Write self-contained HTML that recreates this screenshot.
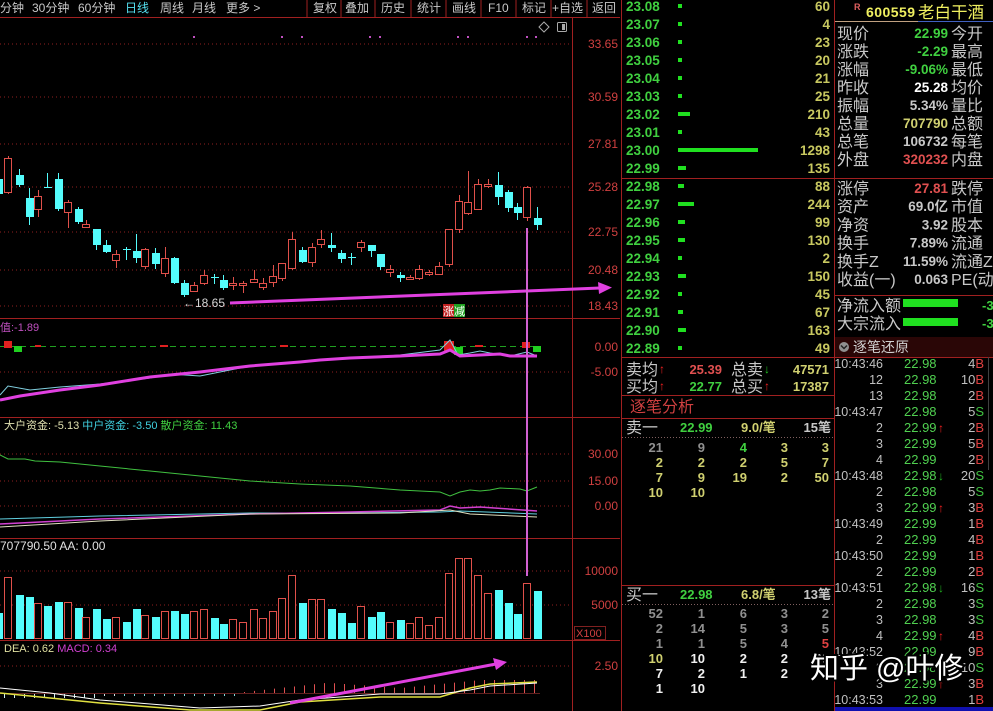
<!DOCTYPE html>
<html><head><meta charset="utf-8"><style>
html,body{margin:0;padding:0;background:#000;width:993px;height:711px;overflow:hidden}
svg{display:block}
text{font-family:"Liberation Sans","Noto Sans CJK SC",sans-serif}
.t{font-size:12px;fill:#c8c8c8}
.ax{font-size:12px;fill:#d04040}
.ob{font-size:13.5px;font-weight:bold}
.lb{font-size:16px;fill:#c8c8c8}
.v{font-size:13px;font-weight:bold}
</style></head><body>
<svg id="s" width="993" height="711" xmlns="http://www.w3.org/2000/svg">
<rect width="993" height="711" fill="#000"/>
<g class="t">
<text x="0" y="12">分钟</text><text x="32" y="12">30分钟</text><text x="78" y="12">60分钟</text>
<text x="125" y="12" style="fill:#54e0f0">日线</text><text x="160" y="12">周线</text><text x="192" y="12">月线</text><text x="226" y="12">更多 &gt;</text>
<text x="313" y="12">复权</text><text x="345" y="12">叠加</text><text x="381" y="12">历史</text><text x="417" y="12">统计</text><text x="452" y="12">画线</text><text x="488" y="12">F10</text><text x="522" y="12">标记</text><text x="552" y="12">+自选</text><text x="592" y="12">返回</text>
</g>
<g stroke="#a02020" stroke-width="1">
<line x1="307" y1="0" x2="307" y2="17"/><line x1="341" y1="0" x2="341" y2="17"/><line x1="375" y1="0" x2="375" y2="17"/><line x1="411" y1="0" x2="411" y2="17"/><line x1="446" y1="0" x2="446" y2="17"/><line x1="481" y1="0" x2="481" y2="17"/><line x1="516" y1="0" x2="516" y2="17"/><line x1="551" y1="0" x2="551" y2="17"/><line x1="587" y1="0" x2="587" y2="17"/>
<line x1="0" y1="17.5" x2="620" y2="17.5"/>
<line x1="572.5" y1="18" x2="572.5" y2="711"/>
<line x1="0" y1="318.5" x2="620" y2="318.5"/>
<line x1="0" y1="417.5" x2="620" y2="417.5"/>
<line x1="0" y1="538.5" x2="620" y2="538.5"/>
<line x1="0" y1="640.5" x2="620" y2="640.5"/>
<line x1="621.5" y1="0" x2="621.5" y2="711"/>
</g>
<g stroke="#902020" stroke-dasharray="1,3" stroke-width="1">
<line x1="0" y1="44" x2="572" y2="44"/><line x1="0" y1="97" x2="572" y2="97"/><line x1="0" y1="144" x2="572" y2="144"/><line x1="0" y1="187" x2="572" y2="187"/><line x1="0" y1="232" x2="572" y2="232"/><line x1="0" y1="270" x2="572" y2="270"/><line x1="0" y1="306" x2="572" y2="306"/>
<line x1="0" y1="372" x2="572" y2="372"/>
<line x1="0" y1="454" x2="572" y2="454"/><line x1="0" y1="481" x2="572" y2="481"/><line x1="0" y1="506" x2="572" y2="506"/>
<line x1="0" y1="571" x2="572" y2="571"/><line x1="0" y1="605" x2="572" y2="605"/>
<line x1="0" y1="666" x2="572" y2="666"/>
</g>
<g class="ax" text-anchor="end">
<text x="618" y="48">33.65</text><text x="618" y="101">30.59</text><text x="618" y="148">27.81</text><text x="618" y="191">25.28</text><text x="618" y="236">22.75</text><text x="618" y="274">20.48</text><text x="618" y="310">18.43</text>
<text x="618" y="351">0.00</text><text x="618" y="376">-5.00</text>
<text x="618" y="458">30.00</text><text x="618" y="485">15.00</text><text x="618" y="510">0.00</text>
<text x="618" y="575">10000</text><text x="618" y="609">5000</text>
<text x="618" y="670">2.50</text>
</g>
<rect x="574.5" y="626.5" width="31" height="13" fill="none" stroke="#802020"/>
<text x="576" y="637" class="ax" style="font-size:11px">X100</text>
<g fill="#c050c0">
<rect x="193" y="36" width="2" height="2"/><rect x="281" y="36" width="2" height="2"/><rect x="301" y="36" width="2" height="2"/><rect x="369" y="36" width="2" height="2"/><rect x="379" y="36" width="2" height="2"/><rect x="457" y="36" width="2" height="2"/><rect x="467" y="36" width="2" height="2"/><rect x="526" y="36" width="2" height="2"/><rect x="535" y="36" width="2" height="2"/>
</g>
<path d="M544 22 L549 27 L544 32 L539 27 Z" fill="none" stroke="#aaa"/>
<rect x="557.5" y="22.5" width="9" height="9" fill="none" stroke="#aaa" rx="1"/><rect x="562" y="24" width="3" height="6" fill="#aaa"/>
<g id="cd"></g>
<text x="183" y="307" style="font-size:12px;fill:#d8d8d8">←18.65</text>
<line x1="230" y1="303" x2="600" y2="288" stroke="#e040e0" stroke-width="3"/>
<path d="M612 287.5 L598 282 L599 294 Z" fill="#e040e0"/>
<rect x="443" y="304" width="11" height="13" fill="#c02020"/><rect x="454" y="304" width="11" height="13" fill="#20a020"/>
<text x="443" y="315" style="font-size:11px;fill:#fff">涨减</text>
<text x="0" y="331" style="font-size:11px;fill:#c050c0">值:-1.89</text>
<line x1="0" y1="346.5" x2="540" y2="346.5" stroke="#20a020" stroke-dasharray="6,4"/>
<g fill="#e02020"><rect x="4" y="341" width="8" height="7"/><rect x="444" y="341" width="10" height="10"/><rect x="522" y="342" width="8" height="6"/><rect x="35" y="345" width="6" height="2"/><rect x="280" y="345" width="8" height="2"/><rect x="160" y="345" width="8" height="2"/><rect x="475" y="345" width="8" height="2"/></g>
<g fill="#20d020"><rect x="14" y="346" width="8" height="6"/><rect x="454" y="347" width="9" height="8"/><rect x="533" y="346" width="8" height="6"/></g>
<polyline fill="none" stroke="#80d0e0" stroke-width="1" points="0,395 8,386 30,390 60,387 100,384 150,378 170,374 200,376 240,368 280,363 310,361 320,360 360,358 400,355 440,350 450,340 458,355 470,353 480,351 490,353 510,356 527,352 537,356"/>
<polyline fill="none" stroke="#e040e0" stroke-width="3" points="0,400 20,396 60,390 100,385 150,377 200,372 250,366 300,362 320,360 350,358 400,356 440,354 450,350 460,356 480,355 500,354 510,356 537,356"/>
<text x="4" y="429" style="font-size:11px"><tspan fill="#e0e0b0">大户资金: -5.13 </tspan><tspan fill="#40d0e0">中户资金: -3.50 </tspan><tspan fill="#40d040">散户资金: 11.43</tspan></text>
<polyline fill="none" stroke="#40c040" points="0,455 8,459 25,459 35,461 60,462 100,466 150,471 200,476 250,481 300,484 350,486 400,490 440,492 450,496 460,492 470,490 480,491 490,490 500,488 520,489 527,491 537,487"/>
<polyline fill="none" stroke="#60d0e0" points="0,519 100,516 250,513 350,513 440,512 460,511 537,514"/>
<polyline fill="none" stroke="#d040d0" stroke-width="1.5" points="0,524 100,519 250,514 350,512 440,510 450,506 460,508 480,507 537,511"/>
<polyline fill="none" stroke="#e0e0c0" points="0,527 100,521 250,514 400,513 450,510 470,514 537,517"/>
<text x="0" y="550" style="font-size:12px;fill:#e0e0e0">707790.50 AA: 0.00</text>
<text x="4" y="652" style="font-size:11px"><tspan fill="#e0e0a0">DEA: 0.62 </tspan><tspan fill="#d040d0">MACD: 0.34</tspan></text>
<g id="mh"></g>
<polyline fill="none" stroke="#e0e040" stroke-width="1.5" points="0,693 50,698 100,703 190,710 260,710 300,702 380,697 440,697 470,688 490,684 537,682"/>
<polyline fill="none" stroke="#fff" points="0,688 50,693 100,700 200,708 260,706 300,700 380,694 440,694 470,690 490,686 537,683"/>
<line x1="290" y1="703" x2="496" y2="664" stroke="#e040e0" stroke-width="3"/>
<path d="M507 662 L493 658 L496 670 Z" fill="#e040e0"/>
<line x1="527" y1="228" x2="527" y2="576" stroke="#d060d0" stroke-width="2"/>

<g stroke="#a02020"><line x1="622" y1="178.5" x2="835" y2="178.5"/><line x1="622" y1="357.5" x2="993" y2="357.5"/><line x1="834.5" y1="0" x2="834.5" y2="711"/>
<line x1="622" y1="395.5" x2="835" y2="395.5"/><line x1="622" y1="418.5" x2="835" y2="418.5"/><line x1="622" y1="585.5" x2="835" y2="585.5"/>
<line x1="835" y1="178.5" x2="993" y2="178.5"/><line x1="835" y1="295.5" x2="993" y2="295.5"/></g>
<g stroke="#806060" stroke-dasharray="1,2"><line x1="622" y1="437.5" x2="835" y2="437.5"/><line x1="622" y1="604.5" x2="835" y2="604.5"/></g>
<g id="ob"></g>
<g class="lb"><text x="626" y="375">卖均</text><text x="626" y="392">买均</text><text x="731" y="375">总卖</text><text x="731" y="392">总买</text></g>
<g class="v" text-anchor="end"><text x="722" y="374" fill="#e05050">25.39</text><text x="722" y="391" fill="#40d040">22.77</text><text x="829" y="374" fill="#d0d070">47571</text><text x="829" y="391" fill="#d0d070">17387</text></g>
<g style="font-size:12px;font-weight:bold"><text x="659" y="373" fill="#f02020">↑</text><text x="659" y="390" fill="#f02020">↑</text><text x="764" y="373" fill="#20c020">↓</text><text x="764" y="390" fill="#f02020">↑</text></g>
<text x="630" y="412" style="font-size:16px;fill:#d04040">逐笔分析</text>
<g class="lb"><text x="626" y="433">卖一</text><text x="626" y="600">买一</text></g>
<g class="v"><text x="680" y="432" fill="#40d040">22.99</text><text x="741" y="432" fill="#d0d070">9.0/笔</text><text x="680" y="599" fill="#40d040">22.98</text><text x="741" y="599" fill="#d0d070">6.8/笔</text></g>
<g class="v" text-anchor="end" fill="#c8c8c8"><text x="831" y="432">15笔</text><text x="831" y="599">13笔</text></g>
<g id="gr"></g>

<text x="854" y="10" style="font-size:9px;font-weight:bold;fill:#e06060">R</text>
<text x="866" y="17" style="font-size:14px;font-weight:bold;fill:#f0f060" textLength="49">600559</text>
<text x="918" y="18" style="font-size:16.5px;fill:#f0f060">老白干酒</text>
<line x1="835" y1="21.5" x2="918" y2="21.5" stroke="#c0a080"/><line x1="918" y1="21.5" x2="993" y2="21.5" stroke="#4060c0"/>
<g id="inf"></g>
<rect x="903" y="299" width="55" height="8" fill="#20e020"/><rect x="903" y="318" width="55" height="8" fill="#20e020"/>
<text x="837" y="311" class="lb">净流入额</text><text x="837" y="329" class="lb">大宗流入</text>
<text x="982" y="310" class="v" fill="#40d040">-3</text><text x="982" y="328" class="v" fill="#40d040">-3</text>
<rect x="835" y="337" width="158" height="20" fill="#2a0606"/>
<circle cx="844" cy="347" r="5" fill="#909090"/><path d="M841 345.5 L844 348.5 L847 345.5" stroke="#222" fill="none" stroke-width="1.5"/>
<text x="853" y="352" style="font-size:14px;fill:#d0d0d0">逐笔还原</text>
<g id="tk"></g>
<rect x="835" y="707" width="158" height="4" fill="#1010b0"/>
<line x1="988.5" y1="357" x2="988.5" y2="470" stroke="#404040"/>
<text x="810" y="678" style="font-size:29px;fill:#000;stroke:#000;stroke-width:4">知乎 @叶修</text>
<text x="810" y="678" style="font-size:29px;fill:#fff">知乎 @叶修</text>
</svg>
<script>
var NS="http://www.w3.org/2000/svg";
function el(p,t,a,txt){var e=document.createElementNS(NS,t);for(var k in a)e.setAttribute(k,a[k]);if(txt!=null)e.textContent=txt;p.appendChild(e);return e;}
var c=[[-2,0,179,194,175,196,613],[8,1,158,192,156,194,577],[18.5,0,175,185,169,187,595],[28.5,0,198,217,188,225,597],[37.5,1,196,209,190,217,603],[46.6,0,187,188,173,188,606],[57.7,0,179,209,173,211,602],[67.6,1,202,212,200,228,602],[77.5,0,209,222,207,224,608],[86,1,224,227,220,228,617],[96,0,229,245,229,250,609],[106,0,245,252,240,253,619],[116,1,254,260,250,268,617],[126,0,249,250,247,260,622],[135.6,0,251,258,234,263,609],[145,1,249,266,248,269,615],[155,0,253,264,248,269,617],[165,1,258,273,247,277,611],[174,0,258,283,257,284,611],[184,0,283,295,280,297,614],[194,1,285,291,282,292,611],[204,1,275,283,270,285,609],[214,0,277,278,274,284,618],[223,0,280,288,275,290,624],[233,1,283,285,277,290,619],[243,1,283,285,281,293,622],[254,1,279,282,270,283,609],[263,1,283,287,278,290,618],[273,1,276,282,265,287,611],[282,1,263,278,263,281,598],[292,1,239,268,232,270,575],[302,0,250,262,247,263,603],[312,1,247,262,243,267,599],[321,1,239,244,230,248,599],[331,0,245,248,233,252,609],[341,0,253,259,250,263,613],[350.6,0,257,258,253,265,623],[361,1,242,247,240,252,606],[371,0,245,251,245,257,617],[380,0,254,267,254,270,612],[390,1,269,272,265,277,622],[400,0,275,278,272,282,620],[410,1,277,279,275,280,623],[419,1,269,278,265,280,617],[429,1,272,274,270,276,625],[439,1,266,274,262,275,617],[449,1,229,264,229,267,573],[459,1,201,229,195,233,558],[468,1,202,213,171,215,558],[478,1,184,209,179,210,575],[488,1,184,186,179,188,593],[498,0,185,197,172,205,590],[508,0,192,208,190,212,603],[517,0,207,213,203,220,614],[527,1,187,217,186,221,583],[537,0,218,225,207,230,591]];
var g=document.getElementById("cd");
c.forEach(function(d){var x=Math.round(d[0]),col=d[1]?"#e0504a":"#54fcfc";
el(g,"line",{x1:x+.5,x2:x+.5,y1:d[4],y2:d[5],stroke:col});
if(d[1]){el(g,"rect",{x:x-3.5,y:d[2]+.5,width:7,height:Math.max(1,d[3]-d[2]),fill:"#000",stroke:col});
el(g,"rect",{x:x-3.5,y:d[6]+.5,width:7,height:638-d[6],fill:"#000",stroke:col});}
else{el(g,"rect",{x:x-3,y:d[2],width:8,height:Math.max(1,d[3]-d[2]),fill:col});
el(g,"rect",{x:x-3,y:d[6],width:8,height:639-d[6],fill:col});}});
var mh=document.getElementById("mh");
for(var x=4;x<540;x+=10){var h;if(x<235){h=-(3+(x<100?2:0));el(mh,"line",{x1:x+.5,x2:x+.5,y1:693,y2:693-h,stroke:x<120?"#d0f0f0":"#80e0e0"});}
else{h=x<330?(x-235)/9:x<400?10-(x-330)/14:x<480?5+(x-400)/10:13;el(mh,"line",{x1:x+.5,x2:x+.5,y1:693,y2:693-h,stroke:"#e05050"});}}
el(mh,"line",{x1:0,x2:540,y1:693.5,y2:693.5,stroke:"#602020"});
var ob=document.getElementById("ob");
var rows=[["23.08",60,4],["23.07",4,4],["23.06",23,4],["23.05",20,4],["23.04",21,4],["23.03",25,4],["23.02",210,12],["23.01",43,4],["23.00",1298,80],["22.99",135,8],["22.98",88,6],["22.97",244,16],["22.96",99,7],["22.95",130,7],["22.94",2,4],["22.93",150,8],["22.92",45,4],["22.91",67,5],["22.90",163,8],["22.89",49,4]];
rows.forEach(function(r,i){var y=i<10?11+i*18:191+(i-10)*18;
el(ob,"text",{x:626,y:y,"class":"ob",fill:"#40d040"},r[0]);
el(ob,"rect",{x:678,y:y-7,width:r[2],height:4,fill:"#20e020"});
el(ob,"text",{x:830,y:y,"class":"ob",fill:"#c8c860","text-anchor":"end"},r[1]);});
var gr=document.getElementById("gr"),cols=[663,705,747,788,829];
var Y="#d0d070",G="#909090",W="#f0f0f0",GR="#40d040",R="#e04040";
var sell=[[["21",G],["9",G],["4",GR],["3",Y],["3",Y]],[["2",Y],["2",Y],["2",Y],["5",Y],["7",Y]],[["7",Y],["9",Y],["19",Y],["2",Y],["50",Y]],[["10",Y],["10",Y]]];
var buy=[[["52",G],["1",G],["6",G],["3",G],["2",G]],[["2",G],["14",G],["5",G],["3",G],["5",G]],[["1",G],["1",G],["5",G],["4",G],["5",R]],[["10",Y],["10",W],["2",W],["2",W],["20",W]],[["7",W],["2",W],["1",W],["2",W]],[["1",W],["10",W]]];
sell.forEach(function(r,i){r.forEach(function(v,j){el(gr,"text",{x:cols[j],y:452+i*15,"class":"v",fill:v[1],"text-anchor":"end"},v[0]);});});
buy.forEach(function(r,i){r.forEach(function(v,j){el(gr,"text",{x:cols[j],y:618+i*15,"class":"v",fill:v[1],"text-anchor":"end"},v[0]);});});
var inf=document.getElementById("inf");
var info=[["现价","22.99","#40d040","今开"],["涨跌","-2.29","#40d040","最高"],["涨幅","-9.06%","#40d040","最低"],["昨收","25.28","#ffffff","均价"],["振幅","5.34%","#c8c8c8","量比"],["总量","707790","#d0d070","总额"],["总笔","106732","#c8c8c8","每笔"],["外盘","320232","#e05050","内盘"],["涨停","27.81","#e05050","跌停"],["资产","69.0亿","#c8c8c8","市值"],["净资","3.92","#c8c8c8","股本"],["换手","7.89%","#c8c8c8","流通"],["换手Z","11.59%","#c8c8c8","流通Z"],["收益(一)","0.063","#c8c8c8","PE(动)"]];
info.forEach(function(r,i){var y=i<8?39+i*18:194+(i-8)*18.2;
el(inf,"text",{x:837,y:y,"class":"lb"},r[0]);
el(inf,"text",{x:948,y:y-1,"class":"v",fill:r[2],"text-anchor":"end",style:"font-size:13.5px"},r[1]);
el(inf,"text",{x:951,y:y,"class":"lb"},r[3]);});
var tk=document.getElementById("tk");
var T=[["10:43:46","22.98","","4","B"],["12","22.98","","10","B"],["13","22.98","","2","B"],["10:43:47","22.98","","5","S"],["2","22.99","u","2","B"],["3","22.99","","5","B"],["4","22.99","","2","B"],["10:43:48","22.98","d","20","S"],["2","22.98","","5","S"],["3","22.99","u","3","B"],["10:43:49","22.99","","1","B"],["2","22.99","","4","B"],["10:43:50","22.99","","1","B"],["2","22.99","","2","B"],["10:43:51","22.98","d","16","S"],["2","22.98","","3","S"],["3","22.98","","3","S"],["4","22.99","u","4","B"],["10:43:52","22.99","","9","B"],["2","22.98","","10","S"],["3","22.99","u","3","B"],["10:43:53","22.99","","1","B"]];
T.forEach(function(r,i){var y=368+i*16;
el(tk,"text",{x:883,y:y,"text-anchor":"end",style:"font-size:12.5px;fill:#c0c0c0"},r[0]);
el(tk,"text",{x:904,y:y,style:"font-size:13px;fill:#50d050"},r[1]);
if(r[2])el(tk,"text",{x:938,y:y,style:"font-size:12px;font-weight:bold;fill:"+(r[2]=="u"?"#f02020":"#20b020")},r[2]=="u"?"↑":"↓");
var t=el(tk,"text",{x:984,y:y,"text-anchor":"end",style:"font-size:13px"});
el(t,"tspan",{fill:"#c0c0c0"},r[3]);el(t,"tspan",{fill:r[4]=="B"?"#e04040":"#40c040"},r[4]);});
</script>
</body></html>
